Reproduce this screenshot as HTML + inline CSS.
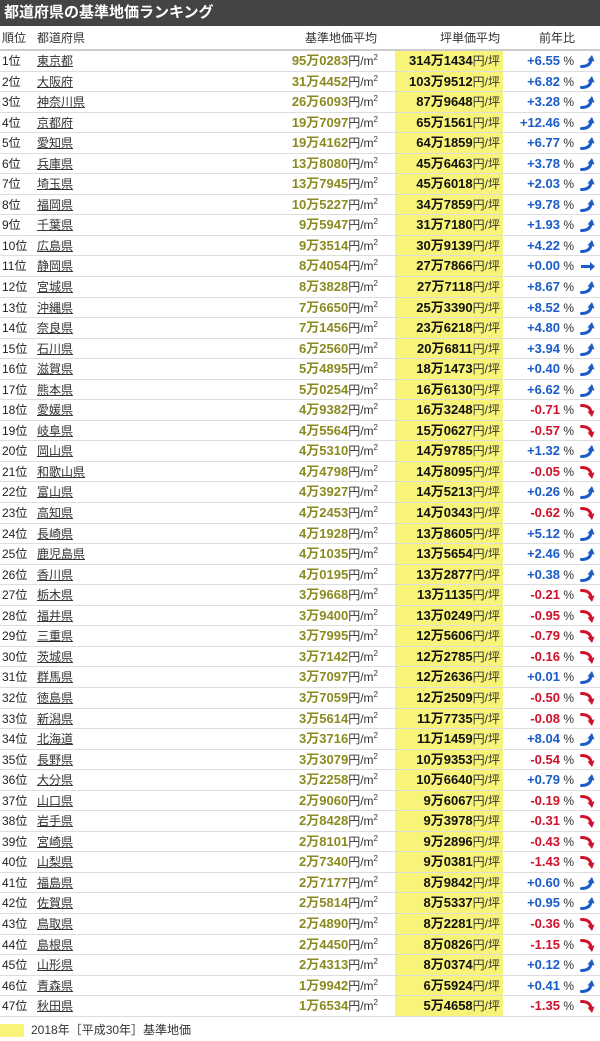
<!DOCTYPE html>
<html><head><meta charset="utf-8"><style>
*{margin:0;padding:0;box-sizing:border-box}
body{width:600px;height:1041px;background:#fff;font-family:"Liberation Sans","Noto Sans CJK JP",sans-serif;font-size:12px;color:#222;position:relative;overflow:hidden}
.title{height:26px;background:#444;color:#fff;font-size:15px;font-weight:bold;line-height:26px;padding-left:4px}
.row{position:relative;height:20.55px;border-bottom:1px solid #ddd;line-height:20px}
.hd{height:25px;line-height:24px;border-bottom:2px solid #ccc;color:#333}
.row span{position:absolute;top:0;white-space:nowrap}
.r{left:2px}.p{left:37px;text-decoration:underline;color:#333}
.lp{right:222px;color:#8a8a20;font-weight:bold;font-size:13px}
.lp i,.ts i{font-style:normal;font-weight:normal;color:#333;font-size:12px}
.ys{position:absolute;left:395px;width:108px;top:0;bottom:0;background:#f8f47a}
.ts{right:100px;font-weight:bold;color:#111;font-size:13px}
.ch{right:26px;font-weight:bold;font-size:13px}
.ch i{font-style:normal;font-weight:normal;color:#333;font-size:12px}
.up{color:#1b5cc8}.dn{color:#d0112b}
.ar{left:580px;top:3px!important;line-height:0}
sup{font-size:8px;line-height:0;vertical-align:5px}
.leg{position:absolute;top:1024px;left:0;width:24px;height:13px;background:#f8f47a}
.legt{position:absolute;top:1021px;left:31px;font-size:12px;color:#333}
</style></head><body>
<div class="title">都道府県の基準地価ランキング</div>
<div class="row hd"><span class="r">順位</span><span style="left:37px">都道府県</span><span style="right:223px">基準地価平均</span><span style="right:100px">坪単価平均</span><span style="right:25px">前年比</span></div>
<div id="rows"></div>
<div class="leg"></div><div class="legt">2018年［平成30年］基準地価</div>
<script>
const d=`東京都,95万0283,314万1434,+6.55
大阪府,31万4452,103万9512,+6.82
神奈川県,26万6093,87万9648,+3.28
京都府,19万7097,65万1561,+12.46
愛知県,19万4162,64万1859,+6.77
兵庫県,13万8080,45万6463,+3.78
埼玉県,13万7945,45万6018,+2.03
福岡県,10万5227,34万7859,+9.78
千葉県,9万5947,31万7180,+1.93
広島県,9万3514,30万9139,+4.22
静岡県,8万4054,27万7866,+0.00
宮城県,8万3828,27万7118,+8.67
沖縄県,7万6650,25万3390,+8.52
奈良県,7万1456,23万6218,+4.80
石川県,6万2560,20万6811,+3.94
滋賀県,5万4895,18万1473,+0.40
熊本県,5万0254,16万6130,+6.62
愛媛県,4万9382,16万3248,-0.71
岐阜県,4万5564,15万0627,-0.57
岡山県,4万5310,14万9785,+1.32
和歌山県,4万4798,14万8095,-0.05
富山県,4万3927,14万5213,+0.26
高知県,4万2453,14万0343,-0.62
長崎県,4万1928,13万8605,+5.12
鹿児島県,4万1035,13万5654,+2.46
香川県,4万0195,13万2877,+0.38
栃木県,3万9668,13万1135,-0.21
福井県,3万9400,13万0249,-0.95
三重県,3万7995,12万5606,-0.79
茨城県,3万7142,12万2785,-0.16
群馬県,3万7097,12万2636,+0.01
徳島県,3万7059,12万2509,-0.50
新潟県,3万5614,11万7735,-0.08
北海道,3万3716,11万1459,+8.04
長野県,3万3079,10万9353,-0.54
大分県,3万2258,10万6640,+0.79
山口県,2万9060,9万6067,-0.19
岩手県,2万8428,9万3978,-0.31
宮崎県,2万8101,9万2896,-0.43
山梨県,2万7340,9万0381,-1.43
福島県,2万7177,8万9842,+0.60
佐賀県,2万5814,8万5337,+0.95
鳥取県,2万4890,8万2281,-0.36
島根県,2万4450,8万0826,-1.15
山形県,2万4313,8万0374,+0.12
青森県,1万9942,6万5924,+0.41
秋田県,1万6534,5万4658,-1.35`.split("\n");
const upA='<svg width="16" height="15" viewBox="0 0 16 15"><path d="M1.5 12.5 Q10 12.5 11 6" stroke="#1b5cc8" stroke-width="3" fill="none" stroke-linecap="round"/><path d="M7.5 6.5 L12 1 L14.5 7.5Z" fill="#1b5cc8"/></svg>';
const dnA='<svg width="16" height="15" viewBox="0 0 16 15"><path d="M1.5 2.5 Q10 2.5 11 9" stroke="#d0112b" stroke-width="3" fill="none" stroke-linecap="round"/><path d="M7.5 8.5 L12 14 L14.5 7.5Z" fill="#d0112b"/></svg>';
const rtA='<svg width="16" height="15" viewBox="0 0 16 15"><path d="M1 6 L10 6 L10 3 L15 7.5 L10 12 L10 9 L1 9Z" fill="#1b5cc8"/></svg>';
let h='';
d.forEach((l,i)=>{const [p,a,b,c]=l.split(",");const up=c[0]=='+';const ar=c=='+0.00'?rtA:(up?upA:dnA);
h+=`<div class="row"><div class="ys"></div><span class="r">${i+1}位</span><span class="p">${p}</span><span class="lp">${a}<i>円/m<sup>2</sup></i></span><span class="ts">${b}<i>円/坪</i></span><span class="ch ${up?'up':'dn'}">${c}<i> %</i></span><span class="ar">${ar}</span></div>`;});
document.getElementById('rows').innerHTML=h;
</script>
</body></html>
